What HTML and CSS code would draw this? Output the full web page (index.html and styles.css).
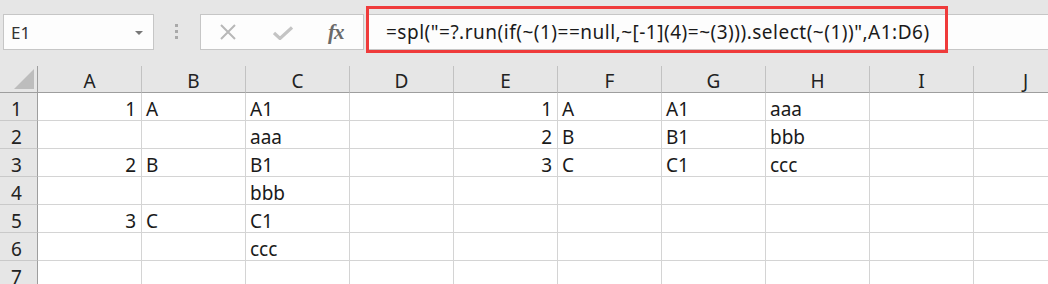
FILE: index.html
```html
<!DOCTYPE html><html>
<head>
<title>spl sheet</title>
<link rel="stylesheet" href="styles.css">
</head>
<body>

<div class="toolbar">
	<div class="namebox">
		<span class="cellref">E1</span>
		<span class="caret"></span>
	</div>
	<div class="grip"><i></i><i></i><i></i></div>
	<div class="fxbox">
		<svg class="icon" width="18" height="16" viewBox="0 0 18 16">
			<path d="M2,1 L16,15 M16,1 L2,15" stroke="#b8b8b8" stroke-width="2" fill="none"/>
		</svg>
		<svg class="icon" width="20" height="14" viewBox="0 0 20 14">
			<path d="M1,7 L7,12.5 L19,1.5" stroke="#c4c4c4" stroke-width="3.2" fill="none"/>
		</svg>
		<span class="fx">fx</span>
	</div>
	<div class="formula">
		<span class="formula-text">=spl("=?.run(if(~(1)==null,~[-1](4)=~(3))).select(~(1))",A1:D6)</span>
		<div class="mark"></div>
	</div>
</div>

<div class="sheet" id="sheet"></div>

<script>
	let	sheet=document.getElementById('sheet')
	,	cols='ABCDEFGHIJ'.split('')
	,	data={
			1:{A:1,B:'A',C:'A1',E:1,F:'A',G:'A1',H:'aaa'}
		,	2:{C:'aaa',E:2,F:'B',G:'B1',H:'bbb'}
		,	3:{A:2,B:'B',C:'B1',E:3,F:'C',G:'C1',H:'ccc'}
		,	4:{C:'bbb'}
		,	5:{A:3,B:'C',C:'C1'}
		,	6:{C:'ccc'}
		,	7:{}
		}
	,	html='<div class="corner"><span class="tri"></span></div>'

	for(let c of cols) html+=`<div class="colhead">${c}</div>`
	for(let r=1;r<=7;r++){
		html+=`<div class="rowhead">${r}</div>`
		for(let c of cols){
			let v=data[r][c]
			html+=v===undefined
				? `<div class="cell"></div>`
				: `<div class="cell ${typeof v=='number'?'num':''}">${v}</div>`
		}
	}
	sheet.innerHTML=html
</script>
</body></html>
```

FILE: styles.css
```css
body{
	margin: 0;
	width: 1048px;
	height: 284px;
	overflow: hidden;
	background: #e6e6e6;
	font-family: "Noto Sans", sans-serif;
	color: #1a1a1a;
}

.toolbar{
	display: flex;
	align-items: flex-start;
	height: 66px;
	padding-left: 3px;
}
.namebox{
	margin-top: 14px;
	width: 151px;
	height: 36px;
	box-sizing: border-box;
	border: 1px solid #c6c6c6;
	background: #fdfdfd;
	display: flex;
	align-items: center;
	justify-content: space-between;
	padding: 0 10px 0 7px;
}
.cellref{font-size: 17px; color: #333;}
.caret{
	width: 0; height: 0;
	border-left: 4px solid transparent;
	border-right: 4px solid transparent;
	border-top: 4px solid #777;
	margin-top: 2px;
}
.grip{
	margin: 24px 22px 0 21px;
	display: flex;
	flex-direction: column;
	gap: 3px;
}
.grip i{display: block; width: 3px; height: 3px; background: #a9a9a9;}
.fxbox{
	margin-top: 14px;
	width: 164px;
	height: 36px;
	box-sizing: border-box;
	border: 1px solid #c6c6c6;
	background: #fdfdfd;
	display: flex;
	align-items: center;
	padding-left: 18px;
}
.fxbox .icon:first-child{margin-right: 36px;}
.fxbox .icon:nth-child(2){margin-right: 35px; margin-top: 2px;}
.fx{
	font-family: "Liberation Serif", serif;
	font-style: italic;
	font-weight: bold;
	font-size: 21px;
	color: #6a6a6a;
	letter-spacing: -1px;
}
.formula{
	position: relative;
	margin: 14px 0 0 2px;
	flex: 1;
	height: 36px;
	box-sizing: border-box;
	border-top: 1px solid #c6c6c6;
	border-bottom: 1px solid #c6c6c6;
	background: #fdfdfd;
	display: flex;
	align-items: center;
	padding-left: 20px;
	white-space: nowrap;
}
.formula-text{font-size: 19px; letter-spacing: 0.5px; color: #1a1a1a;}
.mark{
	position: absolute;
	left: 0;
	top: -9px;
	width: 582px;
	height: 47px;
	box-sizing: border-box;
	border: 3px solid #ef3b3b;
}

.sheet{
	display: grid;
	grid-template-columns: 38px repeat(10, 104px);
	grid-template-rows: 27px repeat(7, 28px);
	font-size: 19px;
}
.sheet > div{
	box-sizing: border-box;
	white-space: nowrap;
	overflow: hidden;
}
.corner{
	position: relative;
	border-right: 1px solid #9e9e9e;
	border-bottom: 1px solid #9e9e9e;
}
.tri{
	position: absolute;
	right: 3px; bottom: 3px;
	width: 0; height: 0;
	border-left: 20px solid transparent;
	border-bottom: 20px solid #bdbdbd;
}
.colhead{
	border-right: 1px solid #c2c2c2;
	border-bottom: 1px solid #9e9e9e;
	text-align: center;
	line-height: 31px;
	color: #222;
}
.rowhead{
	border-right: 1px solid #9e9e9e;
	border-bottom: 1px solid #c9c9c9;
	padding-left: 11px;
	line-height: 32px;
	color: #222;
}
.cell{
	background: #fff;
	border-right: 1px solid #d4d4d4;
	border-bottom: 1px solid #d4d4d4;
	line-height: 32px;
	padding: 0 5px 0 4px;
}
.cell.num{text-align: right;}
```
